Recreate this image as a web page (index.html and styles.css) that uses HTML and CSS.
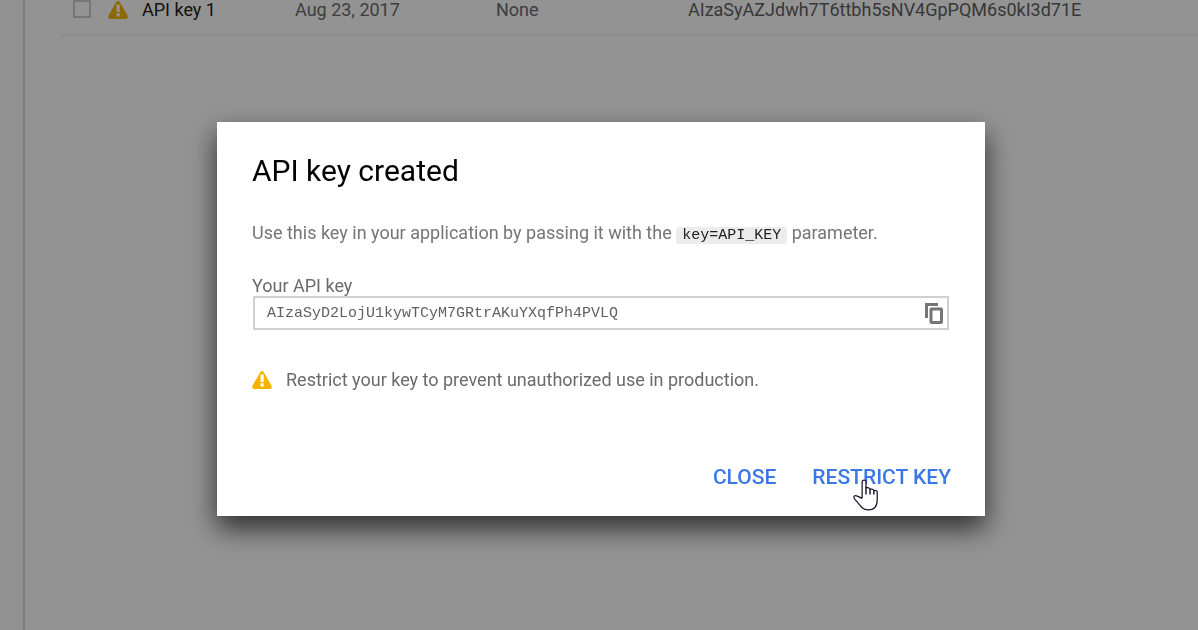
FILE: index.html
```html
<!DOCTYPE html>
<html lang="en">
<head>
<meta charset="utf-8">
<meta name="viewport" content="width=device-width, initial-scale=1">
<title>API key created</title>
<link rel="stylesheet" href="styles.css">
</head>
<body>
<div class="page">
  <aside class="rail"></aside>
  <main class="content">
    <table class="keys">
      <colgroup><col class="col-check"><col class="col-icon"><col class="col-name"><col class="col-date"><col class="col-limit"><col></colgroup>
      <tbody>
        <tr>
          <td><input class="check" type="checkbox" aria-label="Select API key 1"></td>
          <td><svg class="warning" viewBox="0 0 20 18" aria-hidden="true"><path fill="#f4b400" d="M8.300 1 Q10-1 11.700 1 L19.600 14.800 Q20.500 18 17.500 18 H2.500 Q-.5 18 .4 14.800Z"/><path fill="#fff" d="M8.500 3.500h3.200v7.500H8.500zM8.500 12.200h3.200v3.200H8.500z"/></svg></td>
          <td><a class="key-name" href="#key">API key 1</a></td>
          <td>Aug 23, 2017</td>
          <td>None</td>
          <td class="key-value">AIzaSyAZJdwh7T6ttbh5sNV4GpPQM6s0kI3d71E</td>
        </tr>
      </tbody>
    </table>
  </main>
</div>
<div class="backdrop">
  <section class="dialog" role="dialog" aria-modal="true" aria-labelledby="title">
    <h1 class="title" id="title">API key created</h1>
    <p class="intro">Use this key in your application by passing it with the <code class="code">key=API_KEY</code> parameter.</p>
    <label class="label" for="api-key">Your API key</label>
    <div class="field">
      <input class="field-input" id="api-key" type="text" readonly value="AIzaSyD2LojU1kywTCyM7GRtrAKuYXqfPh4PVLQ">
      <button class="copy" type="button" aria-label="Copy API key"><svg class="copy-icon" viewBox="0 0 18 21" aria-hidden="true"><path fill="none" stroke="#757575" stroke-width="3" d="M1.500 15V1.500H13"/><rect x="6" y="6" width="10.500" height="13.500" rx=".5" fill="none" stroke="#757575" stroke-width="3"/></svg></button>
    </div>
    <p class="notice"><svg class="warning" viewBox="0 0 20 18" aria-hidden="true"><path fill="#f4b400" d="M8.300 1 Q10-1 11.700 1 L19.600 14.800 Q20.500 18 17.500 18 H2.500 Q-.5 18 .4 14.800Z"/><path fill="#fff" d="M8.500 3.500h3.200v7.500H8.500zM8.500 12.200h3.200v3.200H8.500z"/></svg>Restrict your key to prevent unauthorized use in production.</p>
    <div class="actions">
      <button class="action" type="button">Close</button>
      <button class="action" type="button">Restrict key<svg class="pointer" viewBox="0 0 26 33" aria-hidden="true"><path fill="#fff" stroke="#15152b" stroke-width="1.300" stroke-linejoin="round" d="M9.500 20V3Q9.500 1 11.500 1T13.500 3V9Q17 8.500 18 10.500Q21 10 22 12Q25.200 11 25.200 14V22Q25 32 16 32Q11 32 8 28L2 21Q0 18.500 1.500 17.500Q3 16.500 5 18L9.500 20"/><path fill="none" stroke="#15152b" stroke-width="1.500" d="M13.500 8v8M17.700 10v6M21.700 12v4"/></svg></button>
    </div>
  </section>
</div>
</body>
</html>
```
FILE: styles.css
```css
* { box-sizing: border-box; }
body {
  margin: 0;
  font-family: Roboto, "Liberation Sans", sans-serif;
  font-size: 18px;
  line-height: 24px;
  color: #6b6b6b;
  background: #fdfdfd;
}
.page { display: flex; min-height: 100vh; }
.rail { width: 25px; flex: none; background: #fafafa; border-right: 2px solid #d8d8d8; }
.content { flex: 1; padding-left: 36px; min-width: 0; overflow: hidden; }
.keys { width: 100%; table-layout: fixed; border-collapse: collapse; }
.keys td { height: 33px; padding: 0 0 14px; border-bottom: 2px solid #f0f0f0; white-space: nowrap; vertical-align: bottom; line-height: 20px; }
.col-check { width: 47px; }
.col-icon { width: 34px; }
.col-name { width: 153px; }
.col-date { width: 201px; }
.col-limit { width: 192px; }
.check {
  appearance: none;
  display: block;
  width: 18px;
  height: 18px;
  margin: 0 0 2px 12px;
  border: 2px solid #cdcdcd;
  background: #fdfdfd;
}
.keys .warning { margin-bottom: 1px; }
.key-name { color: #212121; text-decoration: none; }
.key-value { color: #616161; }
.warning { display: block; width: 20px; height: 18px; flex: none; }
.backdrop {
  position: fixed;
  inset: 0;
  display: grid;
  place-items: center;
  padding: 8px 0 0 4px;
  background: rgba(0, 0, 0, 0.42);
}
.dialog {
  width: 768px;
  max-width: 100%;
  padding: 33px 34px 26px 35px;
  background: #fff;
  box-shadow: 0 12px 26px 0 rgba(0, 0, 0, 0.7);
}
.title { margin: 0 0 35px; font-size: 30px; line-height: 32px; font-weight: 400; color: #000; }
.intro { margin: 0 0 28px; color: #757575; line-height: 22px; }
.code {
  padding: 0 6px;
  border-radius: 3px;
  background: #ececec;
  color: #212121;
  font-family: "Liberation Mono", monospace;
  font-size: 15px;
}
.label { display: block; line-height: 21px; color: #6b6b6b; }
.field { display: flex; align-items: center; height: 34px; margin: 0 2px 0 1px; border: 2px solid #d0d0d0; padding-right: 4px; }
.field-input {
  flex: 1;
  min-width: 0;
  padding: 0 0 0 12px;
  border: 0;
  outline: 0;
  background: none;
  color: #616161;
  font-family: "Liberation Mono", monospace;
  font-size: 15px;
}
.copy { padding: 0; border: 0; background: none; }
.copy-icon { display: block; width: 18px; height: 21px; }
.notice { display: flex; align-items: center; gap: 14px; margin: 38px 0 72px; }
.actions { display: flex; justify-content: flex-end; gap: 36px; }
.action {
  position: relative;
  padding: 0;
  border: 0;
  background: none;
  color: #3b78e7;
  font: 500 21px/26px Roboto, "Liberation Sans", sans-serif;
  text-transform: uppercase;
}
.pointer { position: absolute; left: 41px; top: 15px; width: 25px; height: 32px; }
```
